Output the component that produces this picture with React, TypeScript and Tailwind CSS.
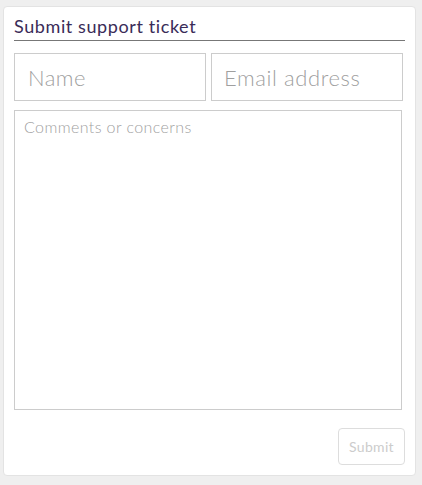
import React from "react";

export default function App() {
  return (
    <main
      className="w-full min-h-screen bg-[#efefef] pt-[6px] pl-[3px]"
      style={{ fontFamily: "Lato, 'Open Sans', sans-serif" }}
    >
      <div className="w-[413px] h-[470px] bg-white border border-[#e3e3e3] rounded-[4px] px-[10px] pt-[6px] flex flex-col">
        {/* Title */}
        <h1 className="text-[18px] leading-[26px] font-normal tracking-[0.6px] text-[#3a2c58] border-b border-[#777] pb-[1px]">
          Submit support ticket
        </h1>

        {/* Name / Email */}
        <div className="flex gap-[5px] mt-[12px]">
          <input
            className="w-[192px] h-[48px] border border-[#cccccc] px-[13px] text-[22px] tracking-[0.5px] font-light text-[#555] placeholder:text-[#9f9f9f] outline-none"
            placeholder="Name"
          />
          <input
            className="w-[192px] h-[48px] border border-[#cccccc] px-[12px] text-[22px] tracking-[0.6px] font-light text-[#555] placeholder:text-[#9f9f9f] outline-none"
            placeholder="Email address"
          />
        </div>

        {/* Comments */}
        <textarea
          className="w-[388px] h-[300px] mt-[9px] border border-[#cccccc] px-[9px] py-[4px] text-[16px] tracking-[0.4px] font-light text-[#555] placeholder:text-[#9f9f9f] resize-none outline-none"
          placeholder="Comments or concerns"
        />

        <div className="flex justify-end mt-[18px]">
          <button className="w-[67px] h-[37px] border border-[#dddddd] rounded-[4px] text-[14px] tracking-[0.3px] text-[#cccccc]">
            Submit
          </button>
        </div>
      </div>
    </main>
  );
}
